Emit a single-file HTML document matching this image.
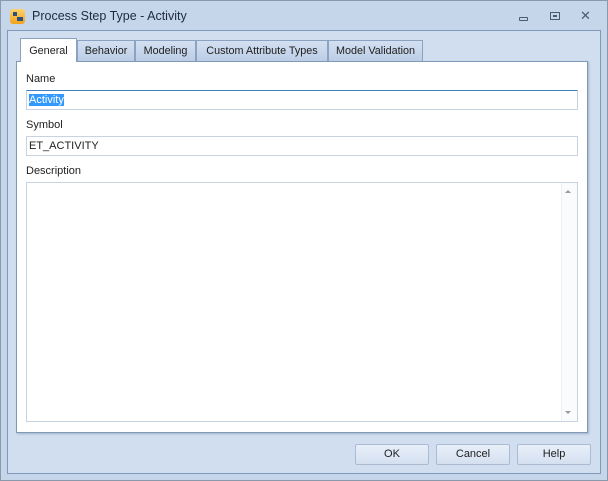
<!DOCTYPE html><html><head><style>
*{box-sizing:border-box;margin:0;padding:0}
body{width:608px;height:481px;overflow:hidden;font-family:"Liberation Sans",sans-serif;font-size:11px;color:#1e1e1e;background:#c5d6eb;position:relative}
.a{position:absolute}
.win{left:0;top:0;width:608px;height:481px;border:1px solid #8a99ab}
.inner{left:7px;top:30px;width:594px;height:444px;border:1px solid #7f9ab8;background:#d1deef}
.content{left:16px;top:61px;width:572px;height:372px;background:#fff;border:1px solid #7f9ab8;box-shadow:1px 1px 2px rgba(90,110,140,.4)}
.tab{top:40px;height:21px;border:1px solid #8ba2c0;border-bottom:none;background:linear-gradient(#d3e0f1,#bccde6);text-align:center;line-height:21px;font-size:10.8px}
.inp{left:26px;width:552px;height:20px;border:1px solid #c8d3e0;background:#fff;padding-left:2px;line-height:18px}
.lbl{left:26px;font-size:11px}
.btn{top:444px;width:74px;height:21px;border:1px solid #aabbd2;border-radius:2px;background:linear-gradient(#e8eff9,#d4e0f0);text-align:center;line-height:19px}
</style></head><body>
<div class="a win"></div>
<div class="a" style="left:10px;top:9px;width:15px;height:15px;border-radius:3px;background:linear-gradient(#ffd36a,#f2a21c)"></div>
<div class="a" style="left:13px;top:12px;width:4px;height:4px;background:#2f4f7f"></div>
<div class="a" style="left:17px;top:17px;width:6px;height:4px;background:#2f4f7f"></div>
<div class="a" style="left:32px;top:9px;font-size:12.5px;color:#1f2a40">Process Step Type - Activity</div>
<div class="a" style="left:519px;top:17px;width:9px;height:4px;border:1px solid #4a5a70;border-radius:1px"></div>
<div class="a" style="left:550px;top:12px;width:10px;height:8px;border:1px solid #4a5a70"></div>
<div class="a" style="left:553px;top:15px;width:4px;height:2px;background:#4a5a70"></div>
<div class="a" style="left:580px;top:8px;font-size:13px;color:#4a5a70">✕</div>
<div class="a inner"></div>
<div class="a content"></div>
<div class="a tab" style="left:20px;top:38px;width:57px;height:24px;background:#fff;line-height:25px;z-index:2">General</div>
<div class="a tab" style="left:77px;width:58px">Behavior</div>
<div class="a tab" style="left:135px;width:61px">Modeling</div>
<div class="a tab" style="left:196px;width:132px">Custom Attribute Types</div>
<div class="a tab" style="left:328px;width:95px">Model Validation</div>
<div class="a lbl" style="top:73px">Name</div>
<div class="a inp" style="top:90px;border-color:#3f83c4 #c8d3e0 #c8d3e0 #c8d3e0"><span style="background:#3399ff;color:#fff">Activity</span></div>
<div class="a lbl" style="top:119px">Symbol</div>
<div class="a inp" style="top:136px">ET_ACTIVITY</div>
<div class="a lbl" style="top:165px">Description</div>
<div class="a inp" style="top:182px;height:240px"></div>
<div class="a" style="left:561px;top:183px;width:16px;height:238px;background:#fafbfc;border-left:1px solid #eef0f3"></div>
<div class="a" style="left:565px;top:190px;border:3px solid transparent;border-bottom:3px solid #999;border-top:none"></div>
<div class="a" style="left:565px;top:411px;border:3px solid transparent;border-top:3px solid #999;border-bottom:none"></div>
<div class="a btn" style="left:355px">OK</div>
<div class="a btn" style="left:436px">Cancel</div>
<div class="a btn" style="left:517px">Help</div>
</body></html>
